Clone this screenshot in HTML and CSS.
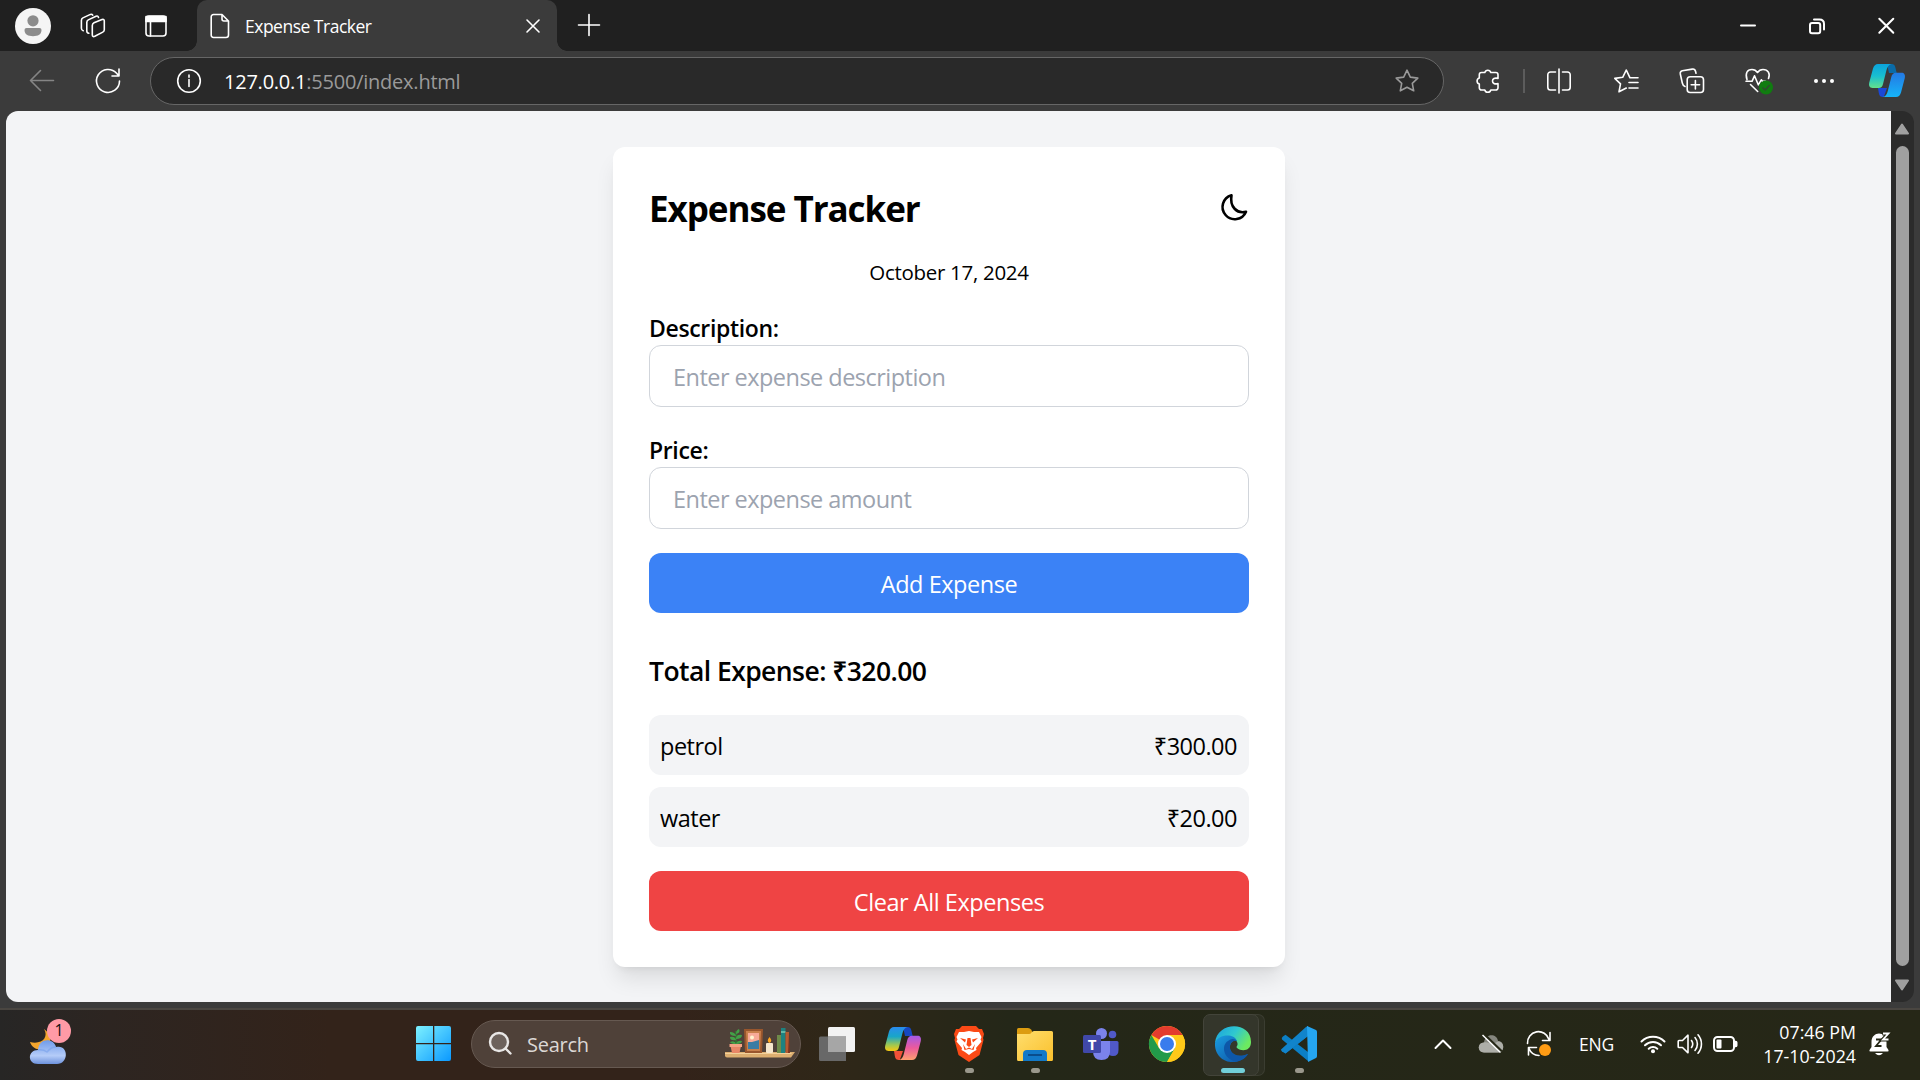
FILE: index.html
```html
<!DOCTYPE html>
<html lang="en">
<head>
<meta charset="utf-8">
<title>Expense Tracker</title>
<link rel="stylesheet" href="styles.css">
</head>
<body>
<div class="screen">
  <header class="tabstrip">
    <div class="tabtools">
      <svg class="avatar" width="36" height="36" viewBox="0 0 36 36"><circle cx="18" cy="18" r="18" fill="#f5f5f5"/><circle cx="18" cy="12.8" r="5.6" fill="#8c8c8c"/><path d="M9.5 22a2 2 0 0 1 2-2h13a2 2 0 0 1 2 2c0 4.500-3.500 6.200-8.500 6.200S9.500 26.500 9.500 22z" fill="#8c8c8c"/></svg>
      <svg class="line" width="26" height="26" viewBox="0 0 26 26"><path d="M14 9.800l8-3.200q2.300-.8 2.300 1.500v8.700q0 1.600-1.500 2.300l-8 4.200q-2.500 1-2.500-1.500v-9.200q0-2 1.700-2.800zM8.800 20.300q-2-.3-2-2.300V9.500q0-1.800 1.500-2.600l7.700-3.700q2-.8 2.500 1.300M3.200 17.700q-1.800-.5-1.800-2.500V7.500q0-1.800 1.500-2.600l7.500-3.500q1.600-.5 2.300.8"/></svg>
      <svg class="line" width="24" height="24" viewBox="0 0 24 24"><rect x="2" y="2" width="20" height="20" rx="3"/><path d="M2 2.500h20v5H2z" fill="#fff"/><path d="M6.500 7v15"/></svg>
    </div>
    <div class="tab">
      <svg class="line" width="20" height="26" viewBox="0 0 20 26"><path d="M3.500 1.500H12l6.500 6.500v14a2.500 2.500 0 0 1-2.500 2.500H3.500A2.300 2.300 0 0 1 1.200 22V4a2.400 2.400 0 0 1 2.300-2.500zM12 1.500V6a2 2 0 0 0 2 2h4.500"/></svg>
      <span class="tabtitle">Expense Tracker</span>
      <svg class="line" width="14" height="14" viewBox="0 0 14 14"><path d="M1 1l12 12M13 1L1 13"/></svg>
    </div>
    <svg class="line newtab" width="22" height="22" viewBox="0 0 22 22"><path d="M11 .5v21M.5 11h21"/></svg>
    <div class="winbtns">
      <svg class="line bold" width="16" height="16" viewBox="0 0 16 16"><path d="M1 7.500h14"/></svg>
      <svg class="line bold" width="16" height="16" viewBox="0 0 16 16"><rect x="1" y="5" width="10.200" height="10.200" rx="2"/><path d="M5 1.500h5.500q4.500 0 4.500 4.500v5.500"/></svg>
      <svg class="line bold" width="16" height="16" viewBox="0 0 16 16"><path d="M1.300.8l14 14M15.300.8l-14 14"/></svg>
    </div>
  </header>

  <nav class="toolbar">
    <svg class="line dim" width="26" height="24" viewBox="0 0 26 24"><path d="M24.500 11.500h-23M11.500 1.500l-10 10 10 10"/></svg>
    <svg class="line reload" width="26" height="26" viewBox="0 0 26 26"><path d="M24.500 13A11.500 11.500 0 1 1 21.600 5.300L24 8M24 1v7h-7"/></svg>
    <div class="address">
      <svg class="line" width="26" height="26" viewBox="0 0 26 26"><circle cx="13" cy="13" r="11.300"/><path d="M13 11.500v7M13 7v2.200"/></svg>
      <span class="url"><b>127.0.0.1</b>:5500/index.html</span>
      <svg class="line dim2" width="26" height="26" viewBox="0 0 26 26"><path d="M13 2.200l3.300 6.900 7.500 1-5.500 5.200 1.400 7.500L13 19.200l-6.700 3.600 1.400-7.500-5.500-5.200 7.500-1z"/></svg>
    </div>
    <div class="actions">
      <svg class="line" width="26" height="26" viewBox="0 0 26 26"><path d="M6.500 4.500h3.300a3.100 3.100 0 0 1 6 0h5a2.200 2.200 0 0 1 2.200 2.200v3.700c-3.500-.8-5.500.4-5.500 2.600s2 3.400 5.500 2.600v4.200a2.200 2.200 0 0 1-2.200 2.200h-5a3.100 3.100 0 0 1-6 0H6.500a2.200 2.200 0 0 1-2.200-2.200v-3.700a3.200 3.200 0 0 1 0-6.100V6.700a2.200 2.200 0 0 1 2.200-2.200z"/></svg>
      <i class="sep"></i>
      <svg class="line" width="26" height="26" viewBox="0 0 26 26"><path d="M13 1v24M9.500 4h-5A2.700 2.700 0 0 0 1.800 6.700v12.600A2.700 2.700 0 0 0 4.500 22h5M16.500 4h5a2.700 2.700 0 0 1 2.700 2.700v12.600a2.700 2.700 0 0 1-2.700 2.700h-5"/></svg>
      <svg class="line" width="26" height="26" viewBox="0 0 26 26"><path d="M25 9.800h-8L13.300 2 9.700 9.300l-7.900 1.100 5.700 5.500L6 23.800l7.300-3.800M16 14.500h9M16 20h9"/></svg>
      <svg class="line" width="26" height="26" viewBox="0 0 26 26"><rect x="8.200" y="8.800" width="16.300" height="15.700" rx="3"/><path d="M16.400 12.500v8.400M12.200 16.700h8.400M6 18.500c-2-.5-2.300-1.800-2.700-3.500L1.300 6c-.3-1.800.3-2.800 2-3.200l10-1.700c1.900-.3 2.800.6 3.200 2.200l.5 2"/></svg>
      <svg class="line" width="28" height="28" viewBox="0 0 28 28"><path d="M2 12.500c-2-6 0-10 5-10 3 0 4.500 1.500 5.500 3 1-1.500 2.500-3 5.500-3 5 0 7.500 4 5.500 9M1 14.300h6l2.500-5.500 3.800 9 3-5 1.200 1.500h3M5.500 17.500l7.200 7"/><circle cx="21" cy="20.500" r="7" fill="#107c10" stroke="none"/><path d="M18 21l2.200 2 4-4.500" stroke="#2f4a2f"/></svg>
      <svg width="20" height="6" viewBox="0 0 20 6" fill="#fff"><circle cx="2" cy="3" r="2"/><circle cx="10" cy="3" r="2"/><circle cx="18" cy="3" r="2"/></svg>
      <svg class="copilot" width="36" height="34" viewBox="0 0 36 34">
        <defs><linearGradient id="ca" x1="0" y1="0" x2="0" y2="1"><stop offset="0" stop-color="#0ba3dc"/><stop offset=".5" stop-color="#18bfd0"/><stop offset="1" stop-color="#64e08c"/></linearGradient><linearGradient id="cb" x1="0" y1="0" x2="0" y2="1"><stop offset="0" stop-color="#2478e4"/><stop offset="1" stop-color="#16b4f8"/></linearGradient></defs>
        <path d="M18 0h4.500c2.500 0 3.500 1.500 4 4l1.200 5H20z" fill="#0a6ba8"/><path d="M9 24h9l-3.200 9c-3.500 0-4.300-1-5-4z" fill="#1a48d8"/>
        <path d="M9 0h13.500c-3 .7-4.200 3-5 6L14 20c-.6 2.600-1.800 4-4.500 4h-6C.8 24-.5 22 .2 18.800L4 4.500C5 1.500 6.500 0 9 0z" fill="url(#ca)"/>
        <path d="M27 33H14c3-.7 4-3 4.800-6l3.500-14c.6-2.600 2-4.300 4.700-4.300h5.500c2.700 0 4 2 3.300 5.200L32 28.500C31 31.500 29.500 33 27 33z" fill="url(#cb)"/>
      </svg>
    </div>
  </nav>

  <div class="viewport">
    <main class="page">
      <section class="card">
        <div class="cardhead">
          <h1>Expense Tracker</h1>
          <svg class="moon" width="30" height="30" viewBox="0 0 30 30"><path d="M12.500 2.200A12.200 12.200 0 1 0 27 18.700C18 21 10.500 14 12.500 2.200z" fill="none" stroke="#000" stroke-width="2.600" stroke-linejoin="round"/></svg>
        </div>
        <p class="date">October 17, 2024</p>
        <form class="form" onsubmit="return false">
          <label class="field"><span>Description:</span><input type="text" placeholder="Enter expense description"></label>
          <label class="field"><span>Price:</span><input type="text" placeholder="Enter expense amount"></label>
          <button class="btn add">Add Expense</button>
        </form>
        <h2>Total Expense: ₹320.00</h2>
        <ul class="items">
          <li><span>petrol</span><span class="amount">₹300.00</span></li>
          <li><span>water</span><span class="amount">₹20.00</span></li>
        </ul>
        <button class="btn clear">Clear All Expenses</button>
      </section>
    </main>
    <aside class="scrollbar">
      <svg width="16" height="12" viewBox="0 0 16 12"><path d="M8 1.500L14 10.500H2z" fill="#a0a0a0" stroke="#a0a0a0" stroke-width="2" stroke-linejoin="round"/></svg>
      <i class="thumb"></i>
      <svg width="16" height="12" viewBox="0 0 16 12"><path d="M8 10.500L14 1.500H2z" fill="#a0a0a0" stroke="#a0a0a0" stroke-width="2" stroke-linejoin="round"/></svg>
    </aside>
  </div>

  <footer class="taskbar">
    <div class="weather">
      <svg width="42" height="46" viewBox="0 0 42 46">
        <defs><linearGradient id="wc" x1="0" y1="0" x2="0" y2="1"><stop offset="0" stop-color="#6f9bea"/><stop offset=".65" stop-color="#b5ccf8"/><stop offset="1" stop-color="#6d92dc"/></linearGradient></defs>
        <path d="M14 8c5 8-2 16-14 13 2 6 8 9 14 7 8-3 9-14 0-20z" fill="#f3a52d"/>
        <path d="M8 43c-11 0-10.500-14 0-14C9 16 24 17 26 26c13-3 13 17 1 17z" fill="url(#wc)"/><path d="M8 29q5-1 9 2 4-5 9-5" fill="none" stroke="#6f9bea" stroke-width="1.500" opacity=".5"/>
      </svg>
      <span class="badge">1</span>
    </div>
    <div class="apps">
      <svg class="start" width="36" height="36" viewBox="0 0 36 36"><defs><linearGradient id="wl" x1="0" y1="0" x2="36" y2="36" gradientUnits="userSpaceOnUse"><stop offset="0" stop-color="#7df1ff"/><stop offset="1" stop-color="#0796ff"/></linearGradient></defs><path d="M2 0h15v17H0V2a2 2 0 0 1 2-2zM18.300 0H33a2 2 0 0 1 2 2v15H18.300zM0 18.300h17V35H2a2 2 0 0 1-2-2zM18.300 18.300H35V33a2 2 0 0 1-2 2H18.300z" fill="url(#wl)"/></svg>
      <div class="search">
        <svg width="24" height="24" viewBox="0 0 24 24" fill="none" stroke="#e9e7e6" stroke-width="2.400" stroke-linecap="round"><circle cx="10" cy="10" r="9" fill="#6d625c"/><path d="M16.500 16.500l5 5"/></svg>
        <span>Search</span>
        <svg width="70" height="32" viewBox="0 0 70 32">
          <path d="M0 24h70l-4 5.500H2q-2 0-2-2z" fill="#dcae70"/><path d="M0 25h66l1 1H0z" fill="#f2d09a"/>
          <path d="M11 17V3" stroke="#2c7d32" stroke-width="1.500"/><path d="M11 8Q4 8 5 4q5 0 6 4zM11 6q0-4 3-5 2 4-3 5zM11 12q-6 1-6-3 5-1 6 3zM11 11q0-5 6-4 0 4-6 4zM11 16q-5 0-6-2 5-2 6 2zM11 16q1-4 6-3 0 3-6 3z" fill="#43a047"/>
          <path d="M5.500 18h10.500l-1.500 7H7z" fill="#e88767"/><path d="M4.500 16h12.500v3H4.500z" fill="#f5a283"/>
          <path d="M19 1h19l-1 24H20z" fill="#99562d"/><path d="M21 3h15l-1 20H22z" fill="#c8804c"/><path d="M23 5h11v16H23z" fill="#f7aa98"/><path d="M23 14l4 0 7-2v9H23z" fill="#3b7ca4"/><circle cx="27" cy="9.500" r="2" fill="#fff4cf"/>
          <rect x="41" y="15" width="7" height="10" rx="1" fill="#f5e6cc"/><path d="M44.500 9q3.500 4 0 6-3.500-2 0-6z" fill="#ffa51e"/>
          <path d="M52 7h5v18h-5z" fill="#6e8a49"/><path d="M56 0h4.500v25H56z" fill="#1e8280"/><path d="M56 3h4.500v2H56z" fill="#64b8a5"/><path d="M60.500 4H64v21h-3.500z" fill="#b55a30"/><path d="M64 5l1 20h-2z" fill="#7c3520"/>
        </svg>
      </div>
      <svg class="view" width="36" height="34" viewBox="0 0 36 34"><rect x="9" width="27" height="25" rx="1.500" fill="#f2f2f2"/><path d="M1.500 9.500H27V34H1.500A1.500 1.500 0 0 1 0 32.500V11a1.500 1.500 0 0 1 1.500-1.500z" fill="#686868" /><path d="M9 9.500h18V25H9z" fill="#a6a6a6"/></svg>
      <svg width="36" height="34" viewBox="0 0 36 34">
        <defs><linearGradient id="cc" x1="0" y1="0" x2="0" y2="1"><stop offset="0" stop-color="#2a8bee"/><stop offset=".4" stop-color="#18a6c8"/><stop offset=".75" stop-color="#a0c850"/><stop offset="1" stop-color="#f8c810"/></linearGradient><linearGradient id="cd" x1="0" y1="0" x2="0" y2="1"><stop offset="0" stop-color="#a35ae8"/><stop offset=".5" stop-color="#ec5a9c"/><stop offset="1" stop-color="#ffa070"/></linearGradient></defs>
        <path d="M18 0h4.500c2.500 0 3.500 1.500 4 4l1.200 5H20z" fill="#1648c0"/><path d="M9 24h9l-3.200 9c-3.500 0-4.300-1-5-4z" fill="#f05038"/>
        <path d="M9 0h13.500c-3 .7-4.200 3-5 6L14 20c-.6 2.600-1.800 4-4.500 4h-6C.8 24-.5 22 .2 18.800L4 4.500C5 1.500 6.500 0 9 0z" fill="url(#cc)"/>
        <path d="M27 33H14c3-.7 4-3 4.800-6l3.500-14c.6-2.600 2-4.300 4.700-4.300h5.500c2.700 0 4 2 3.300 5.200L32 28.500C31 31.500 29.500 33 27 33z" fill="url(#cd)"/>
      </svg>
      <div class="app run"><svg width="36" height="36" viewBox="0 0 36 36">
        <path d="M11 0h14l3 3h3l2 5-1 4 .5 2-4 15L18 36 7.500 29l-4-15 .5-2-1-4 2-5h3z" fill="#fb4a16"/>
        <path d="M18 5l5 1 5 0 2.500 5-1 2.500 1 2-5.500 6.500.5 2L22 26l-4 3-4-3-3.500-2 .5-2-5.500-6.500 1-2-1-2.500L8 6h5z" fill="#fff"/>
        <path d="M9 12l6 1.500-1 3zM27 12l-6 1.500 1 3zM16.500 12h3l1 7-2.500 2-2.500-2zM12 18l3 5 3-1.500 3 1.500 3-5-1.500 6L18 23l-4.500 1z" fill="#fb4a16"/></svg></div>
      <div class="app run"><svg width="36" height="36" viewBox="0 0 36 36"><defs><linearGradient id="fo" x1="0" y1="0" x2="1" y2="1"><stop offset="0" stop-color="#ffde6e"/><stop offset="1" stop-color="#fac02c"/></linearGradient></defs><path d="M1.500 2H11q2 0 3 1.500L15 5v5H0V3.500Q0 2 1.500 2z" fill="#dc9c10"/><path d="M0 8h12q1.500 0 2.500-1.500T17 5h17.500Q36 5 36 6.500v27Q36 35 34.500 35h-33Q0 35 0 33.500z" fill="url(#fo)"/><path d="M6 35V28q0-4 4-4h16q4 0 4 4v7z" fill="#1279c8"/><path d="M11 29h14" stroke="#0a4d8c" stroke-width="2"/></svg></div>
      <div class="app"><svg width="36" height="36" viewBox="0 0 36 36"><circle cx="18.500" cy="7.500" r="5.500" fill="#7b83eb"/><circle cx="29.500" cy="8.500" r="3.800" fill="#5059c9"/><path d="M25 15h9q1.500 0 1.500 1.500V24q0 6-5.500 6-5 0-5-5z" fill="#5059c9"/><path d="M10 15h17v10.500q0 8.500-8.500 8.500T10 25.500z" fill="#7b83eb"/><rect y="9" width="18" height="18" rx="1.500" fill="#4048a9"/><text x="9" y="23.500" text-anchor="middle" class="tletter">T</text></svg></div>
      <div class="app"><svg width="36" height="36" viewBox="0 0 36 36"><circle cx="18" cy="18" r="18" fill="#ffc919"/><path d="M18 18L2.400 9A18 18 0 0 1 33.600 9H18z" fill="#e33b2e"/><path d="M18 18l7.800 4.500L18 36A18 18 0 0 1 2.400 9l7.800 13.500z" fill="#229a4a"/><path d="M18 9h15.600A18 18 0 0 1 18 36l7.800-13.500z" fill="#ffc919"/><circle cx="18" cy="18" r="9" fill="#fff"/><circle cx="18" cy="18" r="7" fill="#397ced"/></svg></div>
      <div class="app run active"><svg width="36" height="36" viewBox="0 0 36 36"><defs><linearGradient id="ea" x1="0" y1="0" x2="1" y2=".5"><stop offset="0" stop-color="#199fe0"/><stop offset=".55" stop-color="#30c8cf"/><stop offset="1" stop-color="#6cea60"/></linearGradient><linearGradient id="eb" x1="0" y1="0" x2="1" y2="1"><stop offset="0" stop-color="#1a9de0"/><stop offset="1" stop-color="#0c4da0"/></linearGradient></defs>
        <path d="M0 17C2-5 36-5 36 16c0 9-9 10-14 6-1-1 0-2 .5-3C24 12 9 6 0 17z" fill="url(#ea)"/><path d="M0 17C3 8 19 7 22 15q-4-1-6 2c-4 7 3 17 17 11C22 43-1 36 0 17z" fill="url(#eb)"/><path d="M13 15c-7 4-5 18 8 20.500 6-.5 10-4 12-7.500C19 34 12 23 16 17q2-3 6-2-4-4-9 0z" fill="#0d57a8"/></svg></div>
      <div class="app run code"><svg width="36" height="36" viewBox="0 0 36 36"><path d="M2 10.500l2.500-1.700L27 26v9L1 13.500q-1-1.500 1-3z" fill="#0b7fc5"/><path d="M2 25.500L27 0v10L4.500 27.500 1 24z" fill="#0b70b8"/><path d="M0 23.500L25 1l2-1v10L4.500 27.500l-3.500-2q-1-1-1-2z" fill="#1184cb"/><path d="M26 0l9 4q1 .7 1 2v24q0 1.500-1 2l-8 4z" fill="#25a5f0"/></svg></div>
    </div>
    <div class="tray">
      <svg class="line bold" width="18" height="12" viewBox="0 0 18 12"><path d="M1.500 10L9 2.500l7.500 7.500"/></svg>
      <svg class="cloud" width="26" height="22" viewBox="0 0 26 22"><path d="M6 19.500c-7 0-7-10 0-10C7 0 19 0 20 8c7 0 7 11.500 0 11.500z" fill="#85867e"/><path d="M6 19.500c-7 0-7-10 0-10 5-1 8 3 14-1 7 0 7 11 0 11z" fill="#adaea8"/><path d="M5.500 1l18 17.500" stroke="#252716" stroke-width="3"/><path d="M4.500 2l18 17.500" stroke="#fff" stroke-width="1.500"/></svg>
      <svg class="line sync" width="26" height="26" viewBox="0 0 26 26"><path d="M1.500 12.500A11 11 0 0 1 23 8.500M24 1.500v8h-7.500M2.500 24v-7.500h8M3 17.500a11 11 0 0 0 10 7"/><circle cx="19" cy="19" r="6" fill="#ff9c14" stroke="none"/></svg>
      <span class="lang">ENG</span>
      <svg class="line wifi" width="26" height="20" viewBox="0 0 26 20"><path d="M1.500 7.500a16.500 16.500 0 0 1 23 0M5 11.300a11.500 11.500 0 0 1 16 0M8.700 14.700a6.300 6.300 0 0 1 8.600 0" stroke-width="2"/><circle cx="13" cy="17.300" r="2" fill="#fff" stroke="none"/></svg>
      <svg class="line" width="26" height="22" viewBox="0 0 26 22"><path d="M2 7.500h3.500L11 2.200v17.600l-5.500-5.300H2q-.8 0-.8-.8V8.300q0-.8.800-.8zM14.500 7.500a6 6 0 0 1 0 7M18 4.500a10 10 0 0 1 0 13M21 1.800a14 14 0 0 1 0 18.400"/></svg>
      <svg class="line" width="26" height="18" viewBox="0 0 26 18"><rect x="2" y="2" width="20" height="14" rx="3.500" stroke-width="2"/><path d="M22.500 6.500v5h1.200q1 0 1-1v-3q0-1-1-1z" fill="#fff"/><rect x="4.500" y="4.500" width="5" height="9" rx="1" fill="#fff" stroke="none"/></svg>
      <div class="clock"><span>07:46 PM</span><span>17-10-2024</span></div>
      <svg width="24" height="26" viewBox="0 0 24 26"><path d="M3.500 16v-5C3.500-.5 18.500-.5 18.500 11v5l2 3q.5 1.500-1 1.500h-17q-1.500 0-1-1.500zM7 22h8q-4 4.500-8 0z" fill="#fff"/><path d="M8 8.500h5.500l-5.500 6.500h5.500" fill="none" stroke="#252716" stroke-width="1.800"/><path d="M14.500 2.500h6l-5.500 6h6" fill="none" stroke="#252716" stroke-width="4"/><path d="M15 2.500h5.500l-5.500 6h5.500" fill="none" stroke="#fff" stroke-width="1.800"/></svg>
    </div>
  </footer>
</div>
</body>
</html>
```
FILE: styles.css
```css
* { box-sizing: border-box; }
body { margin: 0; background: #3b3b3b; font-family: "Open Sans", "Noto Sans", sans-serif; }
h1, h2, p, ul { margin: 0; padding: 0; }
svg { display: block; flex: none; overflow: visible; }
.line { fill: none; stroke: #fff; stroke-width: 1.6; stroke-linecap: round; stroke-linejoin: round; }
.line.bold { stroke-width: 2; }
.line.dim { stroke: #858585; }
.line.dim2 { stroke: #9a9a9a; }
.screen { width: 1920px; height: 1080px; display: flex; flex-direction: column; overflow: hidden; }

.tabstrip { height: 51px; flex: none; background: #202020; display: flex; align-items: center; color: #fff; }
.tabtools { width: 197px; padding-left: 15px; display: flex; align-items: center; }
.tabtools svg:nth-child(2) { margin-left: 29px; }
.tabtools svg:nth-child(3) { margin-left: 38px; }
.tab { position: relative; width: 360px; height: 51px; padding: 0 17px 0 13px; display: flex; align-items: center; background: #3b3b3b; border-radius: 10px 10px 0 0; }
.tab::before, .tab::after { content: ""; position: absolute; bottom: 0; width: 10px; height: 10px; }
.tab::before { left: -10px; background: radial-gradient(circle at 0 0, #202020 9.5px, #3b3b3b 10px); }
.tab::after { right: -10px; background: radial-gradient(circle at 100% 0, #202020 9.5px, #3b3b3b 10px); }
.tabtitle { flex: 1; margin-left: 15px; font-size: 17.5px; letter-spacing: -0.5px; }
.newtab { margin-left: 21px; margin-top: -1px; }
.winbtns { margin-left: auto; padding-right: 26px; display: flex; gap: 53px; }

.toolbar { height: 60px; flex: none; display: flex; align-items: center; padding-left: 29px; }
.reload { margin-left: 40px; }
.address { width: 1294px; height: 48px; margin-left: 29px; padding: 0 23px 0 25px; display: flex; align-items: center; background: #292929; border: 1.5px solid #666; border-radius: 24px; }
.url { flex: 1; margin-left: 22px; font-size: 20px; letter-spacing: -0.23px; color: #9a9a9a; }
.url b { font-weight: 400; color: #fff; }
.actions { flex: 1; display: flex; align-items: center; padding-left: 31px; }
.sep { width: 2px; height: 24px; margin: 0 21px 0 22px; background: #5c5c5c; }
.actions svg:nth-child(4) { margin-left: 41px; }
.actions svg:nth-child(5) { margin-left: 40px; }
.actions svg:nth-child(6) { margin-left: 40px; }
.actions svg:nth-child(7) { margin-left: 41px; }
.actions .copilot { margin-left: 35px; }

.viewport { height: 891px; flex: none; margin: 0 6px; display: flex; border-radius: 12px; overflow: hidden; }
.page { width: 1885px; background: #f3f4f6; padding-top: 36px; display: flex; justify-content: center; align-items: flex-start; }
.card { width: 672px; height: 820px; margin-left: 1px; padding: 36px; background: #fff; border-radius: 12px; color: #000; display: flex; flex-direction: column; box-shadow: 0 15px 22px -4px rgba(0,0,0,.1), 0 6px 9px -6px rgba(0,0,0,.1); }
.cardhead { height: 54px; display: flex; justify-content: space-between; align-items: center; }
h1 { margin-top: -2px; font-size: 35px; line-height: 48px; font-weight: 700; letter-spacing: -1.05px; }
.moon { margin-right: 0; margin-top: -5px; }
.date { margin-top: 20px; height: 30px; line-height: 30px; font-size: 20.5px; letter-spacing: -0.3px; text-align: center; }
.form { margin-top: 22px; display: flex; flex-direction: column; }
.field { display: flex; flex-direction: column; margin-bottom: 24px; font-size: 23px; font-weight: 600; letter-spacing: -0.35px; }
.field span { height: 36px; line-height: 38px; }
.field input { height: 62px; padding: 1px 24px 0 23px; font: 400 23.5px "Open Sans", "Noto Sans", sans-serif; letter-spacing: -0.53px; border: 1px solid #d1d5db; border-radius: 12px; background: #fff; }
.field input::placeholder { color: #9ca3af; opacity: 1; }
.btn { height: 60px; flex: none; border: 0; border-radius: 12px; padding: 1px 0 0; color: #fff; font: 400 23.5px "Open Sans", "Noto Sans", sans-serif; letter-spacing: -0.45px; }
.add { background: #3b82f6; }
.clear { background: #ef4444; margin-top: 24px; }
h2 { height: 102px; padding-top: 37px; line-height: 42px; font-size: 26.5px; font-weight: 600; letter-spacing: -0.56px; }
.items { list-style: none; display: flex; flex-direction: column; gap: 12px; }
.items li { height: 60px; padding: 1px 12px 0 11px; display: flex; justify-content: space-between; align-items: center; background: #f3f4f6; border-radius: 12px; font-size: 23.5px; letter-spacing: -0.5px; }
.scrollbar { width: 23px; background: #2b2b2b; padding: 12px 1px 11px 0; display: flex; flex-direction: column; align-items: center; }
.thumb { width: 13px; height: 820px; margin: 11px 0 13px; border-radius: 7px; background: #a0a0a0; }

.taskbar { height: 72px; margin-top: 6px; flex: none; border-top: 2px solid #4a4641; padding-bottom: 2px; display: flex; align-items: center; color: #fff; background: linear-gradient(90deg, #272625 0, #2d2521 110px, #33231a 330px, #33231a 680px, #2f2718 840px, #242718 1010px, #262717 100%); }
.weather { position: relative; width: 416px; padding-left: 30px; }
.badge { position: absolute; left: 47px; top: -2px; width: 24px; height: 24px; border-radius: 50%; background: #ff9aa6; color: #111; font-size: 16px; line-height: 23px; text-align: center; }
.apps { display: flex; align-items: center; }
.search { width: 330px; height: 48px; margin-left: 19px; padding: 0 5px 0 17px; display: flex; align-items: center; background: #4f4139; border: 1.5px solid #665951; border-radius: 24px; }
.search span { flex: 1; margin-left: 14px; font-size: 20px; letter-spacing: -0.25px; color: #dcd8d5; }
.view { margin: 0 30px 0 18px; }
.app { position: relative; width: 60px; height: 60px; margin-left: 6px; display: flex; justify-content: center; align-items: center; }
.view + svg + .app { margin-left: 18px; }
.app.run::after { content: ""; position: absolute; left: 26px; bottom: 1px; width: 9px; height: 5px; border-radius: 3px; background: #9a988c; }
.app.active::before { content: ""; position: absolute; left: 0; top: 0; width: 54px; height: 60px; border-radius: 7px; background: #34362b; border: 1px solid #43443a; box-shadow: 6px 0 0 -1px #2d2f22, 6px 0 0 0 #3b3d31; }
.app.active svg { position: relative; }
.app.active::after { left: 18px; width: 24px; background: #72cfd9; }
.tletter { font: 700 15px "Open Sans", sans-serif; fill: #fff; }
.tray { margin-left: auto; display: flex; align-items: center; padding-right: 28px; }
.cloud { margin-left: 26px; }
.sync { margin-left: 22px; }
.lang { width: 36px; margin-left: 27px; font-size: 17.5px; letter-spacing: -0.2px; }
.wifi { margin: 0 11px 0 25px; }
.wifi + svg { margin-right: 9px; }
.clock { width: 118px; margin-right: 12px; display: flex; flex-direction: column; align-items: flex-end; font-size: 17.8px; line-height: 24px; }
```
